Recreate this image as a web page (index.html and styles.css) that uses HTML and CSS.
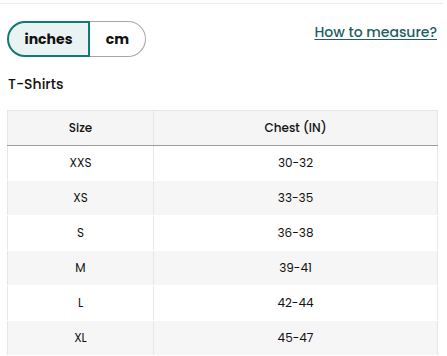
FILE: index.html
```html
<!DOCTYPE html>
<html>
<head>
<meta charset="utf-8">
<link rel="stylesheet" href="styles.css">
</head>
<body>
<div class="topbar"></div>
<div class="page">
  <div class="controls">
    <div class="toggle">
      <button class="seg seg-active">inches</button>
      <button class="seg seg-cm">cm</button>
    </div>
    <a class="measure" href="#">How to measure?</a>
  </div>
  <h2 class="title">T-Shirts</h2>
  <table class="chart">
    <thead>
      <tr><th class="c1">Size</th><th>Chest (IN)</th></tr>
    </thead>
    <tbody>
      <tr><td class="c1">XXS</td><td>30-32</td></tr>
      <tr><td class="c1">XS</td><td>33-35</td></tr>
      <tr><td class="c1">S</td><td>36-38</td></tr>
      <tr><td class="c1">M</td><td>39-41</td></tr>
      <tr><td class="c1">L</td><td>42-44</td></tr>
      <tr><td class="c1">XL</td><td>45-47</td></tr>
    </tbody>
  </table>
</div>
</body>
</html>
```
FILE: styles.css
```css
html, body {
  margin: 0;
  padding: 0;
  background: #fff;
}
body {
  font-family: "Poppins", "Inter", "Noto Sans", sans-serif;
  color: #111;
}
.topbar {
  height: 3px;
  border-bottom: 1px solid #ececec;
  margin-right: 4px;
}
.page {
  padding: 0 9px 0 7px;
}
.controls {
  display: flex;
  justify-content: space-between;
  align-items: flex-start;
  margin-top: 17px;
}
.toggle {
  display: flex;
  height: 36px;
}
.seg {
  font-family: inherit;
  font-size: 14px;
  font-weight: 700;
  color: #111;
  background: #fff;
  margin: 0;
  cursor: pointer;
}
.seg-active {
  width: 83px;
  border: 2px solid #0e7b75;
  border-radius: 18px 0 0 18px;
  background: #e9f3f3;
}
.seg-cm {
  width: 56px;
  border: 1px solid #a6a6a6;
  border-left: none;
  border-radius: 0 18px 18px 0;
}
.measure {
  font-size: 14px;
  font-weight: 500;
  color: #1c5f60;
  text-decoration: underline;
  text-underline-offset: 2px;
  margin-top: 1px;
  margin-right: 1px;
}
.title {
  font-size: 14px;
  font-weight: 500;
  margin: 17px 0 0 1px;
  line-height: 20px;
}
.chart {
  margin-top: 16px;
  width: 431px;
  border-collapse: collapse;
  font-size: 12px;
  font-weight: 400;
}
.chart th, .chart td {
  height: 34px;
  padding: 0;
  text-align: center;
  border-left: 1px solid #e6e6e6;
  border-right: 1px solid #e6e6e6;
}
.chart th {
  font-weight: 500;
  background: #f5f5f5;
  border-top: 1px solid #e6e6e6;
  border-bottom: 1px solid #9c9c9c;
}
.chart td {
  border-bottom: 1px solid #fff;
}
.chart .c1 {
  width: 145px;
}
.chart tbody tr:nth-child(even) td {
  background: #f6f6f6;
}
```
